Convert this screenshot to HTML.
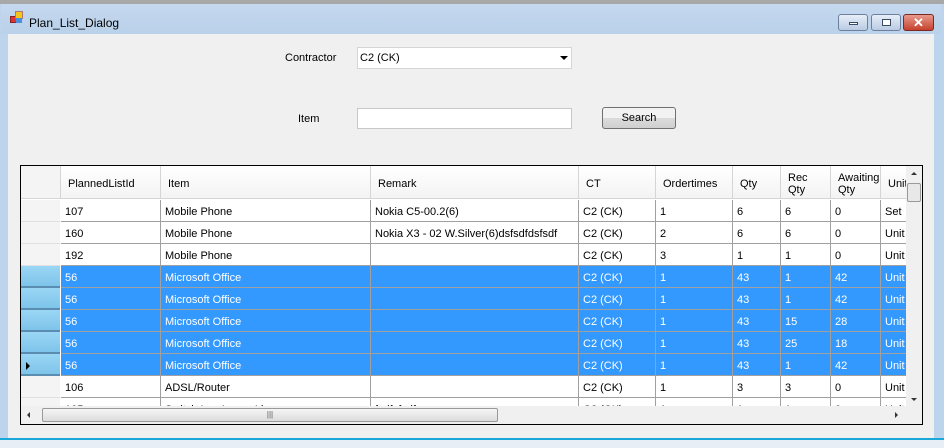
<!DOCTYPE html>
<html><head><style>
*{margin:0;padding:0;box-sizing:border-box}
body{width:944px;height:448px;overflow:hidden;background:#bcd4ec;font-family:"Liberation Sans",sans-serif;font-size:11px;color:#000;position:relative}
.a{position:absolute}
.c{position:absolute;white-space:nowrap;overflow:hidden;line-height:21px;padding-left:4px;padding-top:2px;border-right:1px solid #a0a0a0;border-bottom:1px solid #a0a0a0;height:22px}
.h{position:absolute;white-space:nowrap;overflow:hidden;padding-left:7px;padding-top:3px;border-right:1px solid #d5d5d5;background:linear-gradient(#fff,#f3f3f3);height:33px;display:flex;align-items:center;line-height:12px}
.sel{background:#3399ff;color:#fff}
.rh{position:absolute;left:21px;width:39px;height:22px;border-bottom:1px solid #e0e0e0;background:#f4f4f4}
.rhs{background:linear-gradient(#9ad6f5,#7ec4ea);border-bottom:2px solid #5a8db0}
</style></head><body>
<div class="a" style="left:0;top:0;width:944px;height:4px;background:#a8a8a8"></div>
<div class="a" style="left:1px;top:4px;width:940px;height:30px;background:linear-gradient(#c5d8ee,#b9d1ea)"></div>
<div class="a" style="left:10px;top:16px;width:7px;height:7px;background:#d33;border:1px solid #822"></div>
<div class="a" style="left:15px;top:11px;width:8px;height:8px;background:#f5c518;border:1px solid #a77"></div>
<div class="a" style="left:16px;top:18px;width:6px;height:5px;background:#4a8ee0"></div>
<div class="a" style="left:29px;top:16px;font-size:12px">Plan_List_Dialog</div>
<div class="a" style="left:838px;top:14px;width:30px;height:17px;border:1px solid #6d7f9c;border-radius:3px;background:linear-gradient(#e6eef8,#b9cbe2)"><div class="a" style="left:10px;top:7px;width:9px;height:3px;background:#fff;border:1px solid #3b4b66"></div></div>
<div class="a" style="left:871px;top:14px;width:30px;height:17px;border:1px solid #6d7f9c;border-radius:3px;background:linear-gradient(#e6eef8,#b9cbe2)"><div class="a" style="left:10px;top:4px;width:9px;height:7px;border:1px solid #3b4b66;background:#fff"></div></div>
<div class="a" style="left:903px;top:14px;width:31px;height:17px;border:1px solid #7a2a22;border-radius:3px;background:linear-gradient(#e89a8c,#c5412f);color:#fff;font-weight:bold;font-size:13px;text-align:center;line-height:15px">✕</div>
<div class="a" style="left:8px;top:34px;width:926px;height:404px;background:#f0f0f0"></div>
<div class="a" style="left:0;top:438px;width:944px;height:2px;background:#1aa8d8"></div>
<div class="a" style="left:0;top:440px;width:944px;height:8px;background:#e8eef5"></div>
<div class="a" style="left:285px;top:52px">Contractor</div>
<div class="a" style="left:357px;top:47px;width:215px;height:22px;background:#fff;border:1px solid #d5d5d5;padding:4px 0 0 2px">C2 (CK)</div>
<div class="a" style="left:560px;top:56px;width:0;height:0;border-left:4px solid transparent;border-right:4px solid transparent;border-top:4px solid #000"></div>
<div class="a" style="left:298px;top:113px">Item</div>
<div class="a" style="left:357px;top:108px;width:215px;height:21px;background:#fff;border:1px solid #c8c8c8"></div>
<div class="a" style="left:602px;top:107px;width:74px;height:22px;border:1px solid #707070;border-radius:3px;background:linear-gradient(#f2f2f2 50%,#dcdcdc 50%,#cfcfcf);text-align:center;line-height:20px">Search</div>
<div class="a" style="left:20px;top:165px;width:903px;height:260px;border:1px solid #000;background:#f0f0f0;overflow:hidden">
<div style="position:absolute;left:0;top:0;width:885px;height:240px;background:#fff;overflow:hidden">
<div class="h" style="left:0;width:40px;background:#f4f4f4;border-bottom:1px solid #d5d5d5"></div>
<div class="h" style="left:40px;width:100px">PlannedListId</div>
<div class="h" style="left:140px;width:210px">Item</div>
<div class="h" style="left:350px;width:208px">Remark</div>
<div class="h" style="left:558px;width:77px">CT</div>
<div class="h" style="left:635px;width:77px">Ordertimes</div>
<div class="h" style="left:712px;width:48px">Qty</div>
<div class="h" style="left:760px;width:50px">Rec<br>Qty</div>
<div class="h" style="left:810px;width:50px">Awaiting<br>Qty</div>
<div class="h" style="left:860px;width:30px">Unit</div>
<div style="position:absolute;left:40px;top:32px;width:850px;height:1px;background:#d5d5d5"></div>
<div id="rows"></div>
</div>
<div class="a" style="left:885px;top:0;width:16px;height:240px;background:#f0f0f0"><div class="a" style="left:5px;top:6px;border-left:3px solid transparent;border-right:3px solid transparent;border-bottom:3px solid #333"></div><div class="a" style="left:1px;top:17px;width:14px;height:19px;border:1px solid #999;border-radius:2px;background:#e8e8e8"></div><div class="a" style="left:5px;top:232px;border-left:3px solid transparent;border-right:3px solid transparent;border-top:3px solid #333"></div></div>
<div class="a" style="left:0;top:240px;width:885px;height:18px;background:#f0f0f0"><div class="a" style="left:21px;top:2px;width:456px;height:14px;border:1px solid #999;border-radius:2px;background:linear-gradient(#f5f5f5,#dcdcdc);text-align:center;font-size:8px;line-height:12px;color:#555">|||</div><div class="a" style="left:6px;top:6px;border-top:3px solid transparent;border-bottom:3px solid transparent;border-right:3px solid #333"></div><div class="a" style="left:874px;top:6px;border-top:3px solid transparent;border-bottom:3px solid transparent;border-left:3px solid #333"></div></div>
</div>
<script>
var d=[["107","Mobile Phone","Nokia C5-00.2(6)","C2 (CK)","1","6","6","0","Set",0],
["160","Mobile Phone","Nokia X3 - 02 W.Silver(6)dsfsdfdsfsdf","C2 (CK)","2","6","6","0","Unit",0],
["192","Mobile Phone","","C2 (CK)","3","1","1","0","Unit",0],
["56","Microsoft Office","","C2 (CK)","1","43","1","42","Unit",1],
["56","Microsoft Office","","C2 (CK)","1","43","1","42","Unit",1],
["56","Microsoft Office","","C2 (CK)","1","43","15","28","Unit",1],
["56","Microsoft Office","","C2 (CK)","1","43","25","18","Unit",1],
["56","Microsoft Office","","C2 (CK)","1","43","1","42","Unit",1],
["106","ADSL/Router","","C2 (CK)","1","3","3","0","Unit",0],
["105","Switch Lan Lease Line","fsdfsfsdf","C2 (CK)","1","1","1","0","Unit",0]];
var L=[40,140,350,558,635,712,760,810,860],W=[100,210,208,77,77,48,50,50,30],h="";
d.forEach(function(r,i){var t=34+i*22;h+='<div class="rh '+(r[9]?'rhs':'')+'" style="left:0;top:'+t+'px"></div>';if(i==7)h+='<div class="a" style="left:5px;top:'+(t+8)+'px;border-top:4px solid transparent;border-bottom:4px solid transparent;border-left:4px solid #000"></div>';
for(var j=0;j<9;j++)h+='<div class="c '+(r[9]?'sel':'')+'" style="left:'+L[j]+'px;top:'+t+'px;width:'+W[j]+'px">'+r[j]+'</div>';});
document.getElementById('rows').innerHTML=h;
</script>
</body></html>
